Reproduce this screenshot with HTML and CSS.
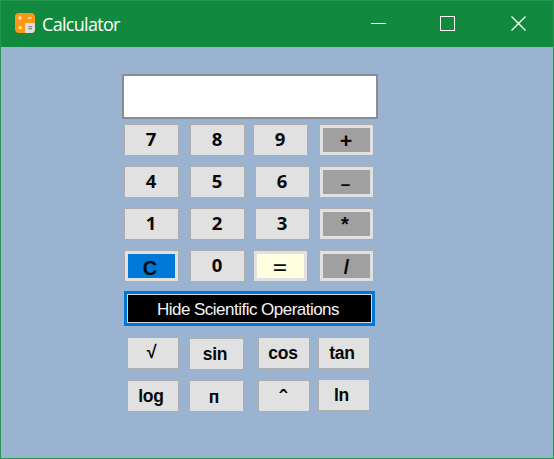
FILE: index.html
```html
<!DOCTYPE html>
<html lang="en">
<head>
<meta charset="utf-8">
<title>Calculator</title>
<link rel="stylesheet" href="styles.css">
</head>
<body>
<div class="window">
  <header class="titlebar">
    <svg class="app-icon" width="22" height="22" viewBox="0 0 22 22">
      <rect x="1" y="1" width="20" height="20" rx="4" fill="#fb9710"/>
      <path d="M11 11h10v6a4 4 0 0 1-4 4h-6z" fill="#dedede"/>
      <path d="M4 6h4M6 4v4M14 6h4M5 14.500l2.500 2.500M7.500 14.500l-2.500 2.500" stroke="#ffe3b5" stroke-width="1.500"/>
      <path d="M14.500 14.700h3.500M14.500 16.700h3.500" stroke="#929292" stroke-width="1.500"/>
    </svg>
    <h1 class="title">Calculator</h1>
    <svg class="controls" width="156" height="16" viewBox="0 0 156 16" fill="none" stroke="#fff">
      <path d="M0 7.500h15"/>
      <rect x="69.500" y=".5" width="14" height="14"/>
      <path d="M140.500 .5l14 14M154.500 .5l-14 14" stroke-width="1.300"/>
    </svg>
  </header>
  <main class="panel">
    <input class="display" type="text" aria-label="Result">
    <div class="keypad">
      <div class="row">
        <button class="key">7</button>
        <button class="key second">8</button>
        <button class="key third near">9</button>
        <button class="key operator"><span>+</span></button>
      </div>
      <div class="row">
        <button class="key">4</button>
        <button class="key second">5</button>
        <button class="key third">6</button>
        <button class="key operator minus"><span>–</span></button>
      </div>
      <div class="row">
        <button class="key">1</button>
        <button class="key second">2</button>
        <button class="key third">3</button>
        <button class="key operator star"><span>*</span></button>
      </div>
      <div class="row">
        <button class="key clear"><span>C</span></button>
        <button class="key second">0</button>
        <button class="key third near equals"><span>=</span></button>
        <button class="key operator slash"><span>/</span></button>
      </div>
    </div>
    <button class="toggle">Hide Scientific Operations</button>
    <div class="scientific">
      <div class="row">
        <button class="fn root">√</button>
        <button class="fn wide lowered">sin</button>
        <button class="fn cos">cos</button>
        <button class="fn last">tan</button>
      </div>
      <div class="row">
        <button class="fn log">log</button>
        <button class="fn wide pi">п</button>
        <button class="fn power">ˆ</button>
        <button class="fn last raised">ln</button>
      </div>
    </div>
  </main>
</div>
</body>
</html>
```

FILE: styles.css
```css
* { box-sizing: border-box; }
body { margin: 0; }
.window {
  width: 554px;
  height: 459px;
  border: 1px solid #259650;
  background: #99b3d1;
  overflow: hidden;
}
.titlebar {
  display: flex;
  align-items: center;
  height: 46px;
  padding: 0 26px 0 13px;
  background: #11893e;
}
.app-icon { margin-top: -2px; }
.title {
  margin: 0 auto 0 6px;
  font: 400 18px/24px "Open Sans", sans-serif;
  letter-spacing: -0.7px;
  color: #fff;
}
.panel { padding: 27px 0 0 121px; }
.display {
  display: block;
  width: 256px;
  height: 45px;
  padding: 0 8px;
  border: 2px solid #8a8e94;
  background: #fff;
  outline: none;
}
.row { display: flex; }
.keypad {
  display: grid;
  gap: 10px;
  margin: 5px 0 0 2px;
}
.key, .fn {
  display: flex;
  align-items: center;
  justify-content: center;
  height: 32px;
  padding: 0;
  border: 1px solid #adadad;
  background: #e1e1e1;
  color: #080808;
}
.key {
  width: 55px;
  padding: 0 1px 3px 0;
  font: 700 18.5px/20px "Open Sans", sans-serif;
}
.second { margin-left: 11px; }
.third { margin: 0 9px 0 10px; }
.near { margin: 0 11px 0 8px; }
.key span {
  display: flex;
  align-items: center;
  justify-content: center;
  width: 47px;
  height: 24px;
}
.operator, .clear, .equals { padding: 0; }
.operator span { padding: 0 1px 3px 0; background: #a0a0a0; font-size: 22px; }
.minus span { padding: 2px 2px 0 0; font-weight: 600; font-size: 20px; }
.star span { padding: 0 3px 0 0; font: 700 20px/24px "Liberation Sans", sans-serif; }
.slash span { padding: 2px 0 0; font: 700 20px/22px "Liberation Sans", sans-serif; }
.clear span {
  padding: 3px 3px 0 0;
  background: #0078d7;
  font: 700 20px/22px "Liberation Sans", sans-serif;
}
.equals span {
  padding: 1px 1px 0 0;
  background: #ffffe1;
  font: 400 26px/24px "Open Sans", sans-serif;
}
.toggle {
  display: block;
  width: 251px;
  height: 35px;
  margin: 9px 0 0 2px;
  padding: 2px 3px 0 0;
  border: 3px solid #0078d7;
  outline: 1px solid #d5d5d5;
  outline-offset: -4px;
  background: #000;
  font: 400 17px/24px "Liberation Sans", sans-serif;
  letter-spacing: -0.52px;
  color: #f4f4f4;
}
.scientific {
  display: grid;
  gap: 10px;
  margin: 11px 0 0 5px;
}
.fn {
  width: 52px;
  padding: 0 2px 0 0;
  font: 700 17.5px/20px "Liberation Sans", sans-serif;
  letter-spacing: -0.2px;
}
.wide { width: 55px; margin: 0 14px 0 10px; }
.last { margin-left: 8px; padding-right: 4px; }
.lowered { margin-top: 1px; padding: 0 3px 0 0; }
.raised { margin-top: -1px; padding-right: 5px; }
.root { font-size: 18px; padding: 0 3px 2px 0; }
.log { padding: 0 4px 0 0; }
.pi { padding: 1px 5px 0 0; }
.power { padding: 5px 2px 0 0; font-size: 23px; }
```
